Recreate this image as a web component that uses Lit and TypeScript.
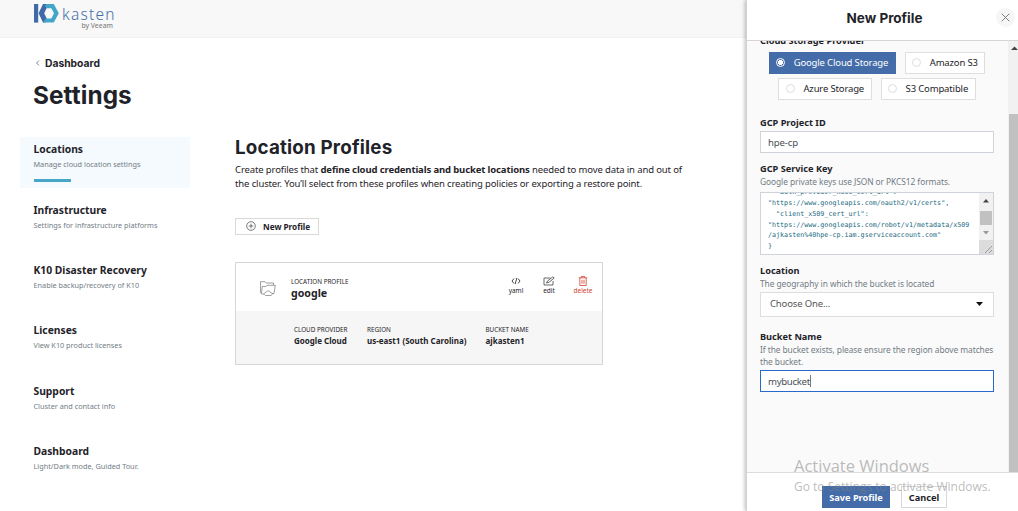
import { LitElement, html, css } from "lit";
import { customElement } from "lit/decorators.js";
import { classMap } from "lit/directives/class-map.js";

const NAV = [
  ["Locations", "Manage cloud location settings"],
  ["Infrastructure", "Settings for infrastructure platforms"],
  ["K10 Disaster Recovery", "Enable backup/recovery of K10"],
  ["Licenses", "View K10 product licenses"],
  ["Support", "Cluster and contact info"],
  ["Dashboard", "Light/Dark mode, Guided Tour."],
];

const KEY_LINES = [
  '  "auth_provider_x509_cert_url":',
  '"https://www.googleapis.com/oauth2/v1/certs",',
  '  "client_x509_cert_url":',
  '"https://www.googleapis.com/robot/v1/metadata/x509',
  "/ajkasten%40hpe-cp.iam.gserviceaccount.com\"",
  "}",
];

@customElement("settings-page")
class SettingsPage extends LitElement {
  static styles = css`
    :host { display: block; height: 511px; color: #1f2329; }
    * { box-sizing: border-box; }
    .top { height: 38px; background: #f8f8f8; border-bottom: 1px solid #f2f2f2; padding: 3px 0 0 33px; }
    .logo { display: grid; grid-template-columns: 27px 54px; height: 30px; }
    .logo svg { display: block; }
    .word { font: 300 15.5px/18px "Noto Sans", sans-serif; color: #4470a8; letter-spacing: 1.25px; padding: 2px 0 0 2px; white-space: nowrap; }
    .by { font: 500 6.8px/8px "Noto Sans", sans-serif; color: #858585; text-align: right; padding-right: 1px; margin-top: -1px; white-space: nowrap; }
    .crumb { display: flex; align-items: center; gap: 5px; height: 16px; margin: 17px 0 0 35px; font: 700 10.3px/16px Inter, sans-serif; }
    h1 { font: 700 24.3px/30px Inter, sans-serif; margin: 9px 0 0 33px; letter-spacing: .1px; }
    .cols { display: grid; grid-template-columns: 170px 1fr; column-gap: 45px; margin: 27px 0 0 20px; }
    .item { height: 51px; margin-bottom: 9.3px; padding: 5px 0 0 13.5px; white-space: nowrap; }
    .item + .item { padding-top: 5.4px; }
    .item.on { background: #f4fafd; }
    .t { font: 700 10.3px/15px "Noto Sans", sans-serif; }
    .s { font: 7.3px/14px "Noto Sans", sans-serif; color: #727c85; }
    .bar { width: 37px; height: 2.5px; background: #48a6c9; margin-top: 8px; }
    h2 { font: 700 18.8px/24px Inter, sans-serif; letter-spacing: .18px; margin: -1px 0 0; }
    .lead { font: 9.5px/13.6px "Noto Sans", sans-serif; letter-spacing: -.125px; margin: 3.4px 0 0; white-space: nowrap; }
    .new { display: flex; align-items: center; gap: 6px; width: 84px; height: 17px; margin-top: 27.4px; border: 1px solid #d9d9d9; padding-left: 10px; font: 700 8.2px/15px "Noto Sans", sans-serif; white-space: nowrap; }
    .new span { margin-left: 1px; }
    .card { width: 368px; height: 103px; border: 1px solid #d6d6d6; margin-top: 27px; display: grid; grid-template-columns: minmax(0, 1fr); grid-template-rows: 48px 1fr; }
    .head { display: flex; padding-left: 23px; }
    .folder { margin-top: 17px; width: 32px; flex: none; }
    .name { width: 208px; flex: none; padding-top: 13px; }
    .cap { font: 6.3px/11px "Noto Sans", sans-serif; white-space: nowrap; }
    .name b { display: block; font: 700 10.6px/12px "Noto Sans", sans-serif; }
    .acts { display: grid; grid-template-columns: 34px 32px 36px; }
    .act { display: flex; flex-direction: column; align-items: center; padding-top: 13px; font: 6.5px/10px "Noto Sans", sans-serif; }
    .red { color: #d0432f; }
    .foot { background: #f6f6f6; display: grid; grid-template-columns: 73px 118.5px 1fr; padding: 13px 0 0 58px; }
    .foot b { display: block; font: 700 8px/11px "Noto Sans", sans-serif; white-space: nowrap; }
  `;
  render() {
    return html`
      <div class="top"><div class="logo">
        <svg width="27" height="21" viewBox="0 0 27 21">
          <path d="M1 1H5.2V19.6H1z" fill="#3f69a8"/>
          <path d="M10 1H14.5L15.8 4.8H13.8L11.2 10.3L13.8 15.8L12.5 19.6H10L5.6 10.3z" fill="#3f69a8"/>
          <path d="M13 1H20.8L25.8 10.3L20.8 19.6H10L12.8 15.4H18.3L21 10.3L18.3 5.2H13.5L12 3z" fill="#43a6c9"/>
        </svg>
        <div><div class="word">kasten</div><div class="by">by Veeam</div></div>
      </div></div>
      <div class="crumb">
        <svg width="5" height="8" viewBox="0 0 5 8"><path d="M4 1.5L1.5 4L4 6.5" fill="none" stroke="#666" stroke-width=".8"/></svg>
        <span>Dashboard</span>
      </div>
      <h1>Settings</h1>
      <div class="cols">
        <nav>${NAV.map(([t, s], i) => html`
          <div class=${classMap({ item: true, on: i === 0 })}>
            <div class="t">${t}</div><div class="s">${s}</div>${i === 0 ? html`<div class="bar"></div>` : ""}
          </div>`)}</nav>
        <main>
          <h2>Location Profiles</h2>
          <p class="lead">Create profiles that <b>define cloud credentials and bucket locations</b> needed to move data in and out of<br>the cluster. You’ll select from these profiles when creating policies or exporting a restore point.</p>
          <div class="new">
            <svg width="10" height="10" viewBox="0 0 10 10" fill="none" stroke="#444" stroke-width=".7"><circle cx="5" cy="5" r="4.3"/><path d="M5 2.7V7.3M2.7 5H7.3"/></svg>
            <span>New Profile</span>
          </div>
          <section class="card">
            <div class="head">
              <div class="folder"><svg width="17" height="17" viewBox="0 0 17 17" fill="none" stroke="#777" stroke-width=".7">
                <path d="M5 14H2.8L1.5 12.5V1.7H6L7.3 3H14.5V5M2.5 13.5L3.2 6.5H7L8 5.3H16.3L15 13.5H13"/><path d="M6.5 15.5C4.5 14.5 5 12.3 7 12.4C7.6 10.4 10.8 10.4 11.3 12.4C13.3 12.3 13.8 14.8 12 15.5z"/>
              </svg></div>
              <div class="name"><div class="cap">LOCATION PROFILE</div><b>google</b></div>
              <div class="acts">
                <div class="act"><svg width="12" height="10" viewBox="0 0 12 10" fill="none" stroke="#333" stroke-width=".9"><path d="M4 2.5L2 5L4 7.5M8 2.5L10 5L8 7.5M6.8 2L5.2 8"/></svg>yaml</div>
                <div class="act"><svg width="12" height="10" viewBox="0 0 12 10" fill="none" stroke="#444" stroke-width=".8"><path d="M7.5 2H1V9H10V5M3.5 7L4.3 5.2L9.8 .9L11.2 2L6 6.3z"/></svg>edit</div>
                <div class="act red"><svg width="10" height="10" viewBox="0 0 10 10" fill="none" stroke="currentColor" stroke-width=".8"><path d="M.7 1.8H9.3M3.3 1.8V.5H6.7V1.8M1.8 2V9.5H8.2V2M4 3.8V7.8M6 3.8V7.8"/></svg>delete</div>
              </div>
            </div>
            <div class="foot">
              <div><div class="cap">CLOUD PROVIDER</div><b>Google Cloud</b></div>
              <div><div class="cap">REGION</div><b>us-east1 (South Carolina)</b></div>
              <div><div class="cap">BUCKET NAME</div><b>ajkasten1</b></div>
            </div>
          </section>
        </main>
      </div>`;
  }
}

@customElement("profile-panel")
class ProfilePanel extends LitElement {
  static styles = css`
    :host { display: grid; grid-template-rows: 40px 432px 39px; height: 511px; background: #fff; color: #1f2329; border-left: 1px solid #d2d2d2; box-shadow: -1px 0 4px rgba(0,0,0,.28); }
    * { box-sizing: border-box; }
    header { display: grid; grid-template-columns: 1fr 22px; align-items: center; padding-left: 7px; }
    header h3 { font: 700 13.5px/20px Inter, sans-serif; margin: -4px 0 0 19px; text-align: center; }
    .x { width: 19px; height: 19px; border-radius: 50%; background: #f6f6f6; display: grid; place-items: center; margin-top: -5px; }
    .body { display: grid; grid-template-columns: 1fr 10px; background: #fafafa; border-top: 1px solid #d5d5d5; overflow: hidden; }
    .form { padding: 0 14px 0 13px; overflow: hidden; height: 431px; }
    .lbl { font: 700 9.2px/14px "Noto Sans", sans-serif; height: 14px; white-space: nowrap; }
    .lbl.first { margin-top: -7px; }
    .help { font: 8.4px/12px "Noto Sans", sans-serif; letter-spacing: -.07px; color: #727c85; white-space: nowrap; }
    .radios { display: flex; flex-wrap: wrap; justify-content: center; gap: 4px 9px; margin-top: 3.5px; }
    .r { height: 22px; display: flex; align-items: center; gap: 8.5px; background: #fff; border: 1px solid #dedede; padding: 0 6.5px; font: 9.5px/20px "Noto Sans", sans-serif; letter-spacing: -.15px; white-space: nowrap; }
    .r i { width: 9px; height: 9px; border-radius: 50%; border: 1px solid #ddd; }
    .r.on { background: #446ca9; border-color: #446ca9; color: #fff; }
    .r.on i { border-color: #fff; background: radial-gradient(circle, #fff 0 2.3px, transparent 2.8px); }
    .in { height: 22px; background: #fff; border: 1px solid #ced4da; padding: 0 7px; font: 9.6px/21px "Noto Sans", sans-serif; letter-spacing: -.15px; color: #495057; display: flex; align-items: center; }
    .in.focus { border-color: #2869cc; }
    .in.focus { letter-spacing: -.3px; }
    .caret { width: 1px; height: 12px; background: #777; }
    .ta { height: 63px; background: #fff; border: 1px solid #ced4da; display: grid; grid-template-columns: 1fr 14px; overflow: hidden; }
    pre { margin: -6px 0 0 7px; font: 6.7px/10.9px "DejaVu Sans Mono", monospace; color: #226a80; }
    .sel { height: 25px; background: #fff; border: 1px solid #ddd; display: flex; align-items: center; justify-content: space-between; padding: 0 10px 0 9px; font: 9.5px/22px "Noto Sans", sans-serif; letter-spacing: -.15px; color: #555; }
    footer { border-top: 1px solid #ddd; display: flex; gap: 11px; padding: 13px 0 0 75px; }
    .btn { height: 22px; border: 1px solid #d7d7d7; background: #fff; font: 700 9.2px/21px "Noto Sans", sans-serif; text-align: center; white-space: nowrap; width: 46px; }
    .btn.p { width: 68px; background: #446ca9; border-color: #446ca9; color: #fff; }
    .g1 { margin-top: 16.5px; } .g2 { margin-top: 9px; } .g3 { margin-top: 9px; } .g4 { margin-top: 13.5px; }
    .gap { margin-top: 2px; } .gap1 { margin-top: 1.4px; } .gap3 { margin-top: 3.4px; }
    svg { display: block; }
  `;
  render() {
    return html`
      <header><h3>New Profile</h3><div class="x"><svg width="9" height="9" viewBox="0 0 9 9"><path d="M.7 .7L8.3 8.3M8.3 .7L.7 8.3" stroke="#6b7279" stroke-width=".9"/></svg></div></header>
      <div class="body">
        <div class="form">
          <div class="lbl first">Cloud Storage Provider</div>
          <div class="radios">
            <div class="r on"><i></i>Google Cloud Storage</div><div class="r"><i></i>Amazon S3</div>
            <div class="r"><i></i>Azure Storage</div><div class="r"><i></i>S3 Compatible</div>
          </div>
          <div class="lbl g1">GCP Project ID</div>
          <div class="in gap1">hpe-cp</div>
          <div class="lbl g2">GCP Service Key</div>
          <div class="help">Google private keys use JSON or PKCS12 formats.</div>
          <div class="ta gap3"><pre>${KEY_LINES.join("\n")}</pre>
            <svg width="14" height="61" viewBox="0 0 14 61"><path d="M0 0H14V61H0z" fill="#f1f1f1"/><path d="M1 18H13V32H1z" fill="#c1c1c1"/><path d="M0 47H14V61H0z" fill="#dcdcdc"/><path d="M4 9.5L7 6L10 9.5z" fill="#444"/><path d="M4 38L7 41.5L10 38z" fill="#999"/><path d="M6 60L13 53M10 60L13 57" stroke="#888" stroke-width=".8"/></svg>
          </div>
          <div class="lbl g3">Location</div>
          <div class="help">The geography in which the bucket is located</div>
          <div class="sel gap">Choose One...<svg width="7" height="4" viewBox="0 0 7 4"><path d="M0 0H7L3.5 4z" fill="#111"/></svg></div>
          <div class="lbl g4">Bucket Name</div>
          <div class="help">If the bucket exists, please ensure the region above matches<br>the bucket.</div>
          <div class="in focus gap">mybucket<span class="caret"></span></div>
        </div>
        <svg width="10" height="431" viewBox="0 0 10 431"><path d="M0 0H10V431H0z" fill="#f1f1f1"/><path d="M1 73H10V431H1z" fill="#c1c1c1"/><path d="M3 9L6.5 5.5L10 9z" fill="#444"/></svg>
      </div>
      <footer><div class="btn p">Save Profile</div><div class="btn">Cancel</div></footer>`;
  }
}

@customElement("app-root")
class AppRoot extends LitElement {
  static styles = css`
    :host { display: grid; grid-template-columns: 746px 272px; width: 1018px; height: 511px; overflow: hidden; background: #fff; position: relative; }
    .mark { position: absolute; left: 794px; top: 455px; color: rgba(130,130,130,.55); font-family: "Open Sans", sans-serif; white-space: nowrap; }
    .a { font-size: 16.5px; line-height: 22px; }
    .b { font-size: 12px; line-height: 19px; }
  `;
  render() {
    return html`<settings-page></settings-page><profile-panel></profile-panel>
      <div class="mark"><div class="a">Activate Windows</div><div class="b">Go to Settings to activate Windows.</div></div>`;
  }
}
